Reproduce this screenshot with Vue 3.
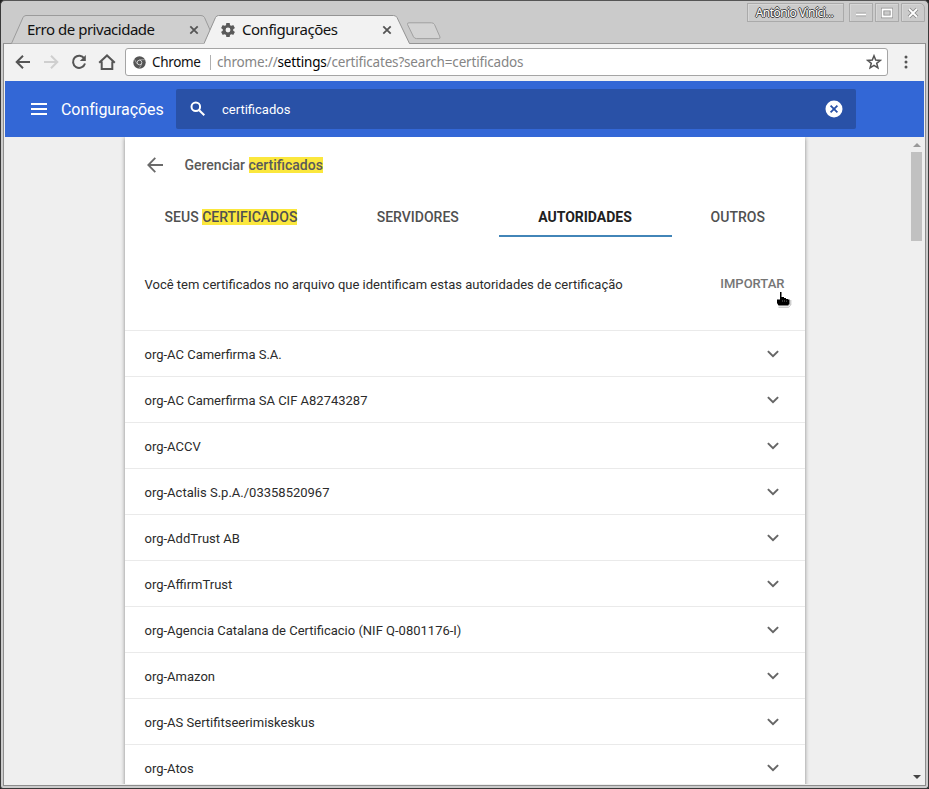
<script setup>
const tabs = [
  { id: 'seus', before: 'SEUS ', mark: 'CERTIFICADOS' },
  { id: 'servidores', before: 'SERVIDORES' },
  { id: 'autoridades', before: 'AUTORIDADES', active: true },
  { id: 'outros', before: 'OUTROS' }
]
const authorities = [
  'org-AC Camerfirma S.A.',
  'org-AC Camerfirma SA CIF A82743287',
  'org-ACCV',
  'org-Actalis S.p.A./03358520967',
  'org-AddTrust AB',
  'org-AffirmTrust',
  'org-Agencia Catalana de Certificacio (NIF Q-0801176-I)',
  'org-Amazon',
  'org-AS Sertifitseerimiskeskus',
  'org-Atos'
]
</script>

<template>
  <div class="window">
    <header class="tabstrip">
      <div class="tab tab-back">
        <svg class="tab-shape" width="206" height="29" viewBox="0 0 206 29">
          <path d="M0.5 28.5 12 2.5Q13 .5 15 .5H190Q192.500 .5 193.500 2.500L205 28.500" fill="#cfcfcf" stroke="#9b9b9b" />
        </svg>
        <span class="tab-title first-title">Erro de privacidade</span>
        <svg class="tab-close" width="10" height="10" viewBox="0 0 10 10"><path d="M1.300 1.300 8.700 8.700M8.700 1.300 1.300 8.700" /></svg>
      </div>
      <div class="tab tab-front">
        <svg class="tab-shape" width="206" height="30" viewBox="0 0 206 30">
          <path d="M0 29 11.500 2.500Q12.500 .5 14.500 .5H189.500Q192 .5 193 2.500L205.500 29V30H0Z" fill="#f2f2f2" />
          <path d="M0 28.500 11.500 2.500Q12.500 .5 14.500 .5H189.500Q192 .5 193 2.500L205.500 28.500" fill="none" stroke="#949494" />
        </svg>
        <svg class="gear" width="14" height="14" viewBox="2 2 20 20">
          <path fill="#5a5a5a" d="M19.430 12.980c.04-.32.070-.64.070-.98s-.03-.66-.07-.98l2.110-1.650c.19-.15.240-.42.120-.64l-2-3.460c-.12-.22-.39-.3-.61-.22l-2.490 1c-.52-.4-1.080-.73-1.690-.98l-.38-2.650C14.460 2.180 14.250 2 14 2h-4c-.25 0-.46.180-.49.420l-.38 2.650c-.61.250-1.170.59-1.690.98l-2.490-1c-.23-.09-.49 0-.61.220l-2 3.460c-.13.220-.07.490.12.640l2.110 1.650c-.04.320-.07.650-.07.980s.030.66.070.98l-2.110 1.650c-.19.150-.24.420-.12.640l2 3.460c.12.220.39.300.61.220l2.490-1c.52.400 1.080.730 1.690.980l.38 2.650c.030.240.240.420.490.420h4c.250 0 .46-.18.490-.42l.38-2.650c.61-.25 1.170-.59 1.690-.98l2.490 1c.230.090.490 0 .61-.22l2-3.460c.12-.22.070-.49-.12-.64zM12 15.500a3.500 3.500 0 1 1 0-7 3.500 3.500 0 0 1 0 7z" />
        </svg>
        <span class="tab-title second-title">Configurações</span>
        <svg class="tab-close" width="10" height="10" viewBox="0 0 10 10"><path d="M1.300 1.300 8.700 8.700M8.700 1.300 1.300 8.700" /></svg>
      </div>
      <svg class="new-tab" width="36" height="18" viewBox="0 0 36 18">
        <path d="M3 .8H25.500Q27.500 .8 28.500 2.500L34 15Q34.500 16.600 32.500 16.600H10.500Q8.500 16.600 7.500 14.800L1.500 2.500Q1 .8 3 .8Z" fill="#d3d3d3" stroke="#a0a0a0" />
      </svg>
      <div class="controls">
        <span class="user">Antônio Viníci...</span>
        <span class="control min"><svg width="12" height="12" viewBox="0 0 12 12"><path d="M1 7.500H11" class="halo" /><path d="M1 7.500H11" class="ink" /></svg></span>
        <span class="control max"><svg width="12" height="12" viewBox="0 0 12 12"><path d="M1.500 2.500H10.500V9.500H1.500Z" class="halo" /><path d="M1.500 2.500H10.500V9.500H1.500Z" class="ink" /></svg></span>
        <span class="control close"><svg width="12" height="12" viewBox="0 0 12 12"><path d="M2 2 10 10M10 2 2 10" class="halo" /><path d="M2 2 10 10M10 2 2 10" class="ink" /></svg></span>
      </div>
    </header>

    <div class="inner">
      <nav class="toolbar">
        <svg class="nav-icon" width="16" height="16" viewBox="0 0 16 16"><path d="M15 8H2M8 1.700 1.700 8 8 14.300" /></svg>
        <svg class="nav-icon disabled" width="16" height="16" viewBox="0 0 16 16"><path d="M1 8H14M8 1.700 14.300 8 8 14.300" /></svg>
        <svg class="nav-icon" width="16" height="16" viewBox="0 0 16 16"><path d="M13.300 4.500A6.100 6.100 0 1 0 14 9.500" /><path d="M14.800 1V7H8.800Z" class="solid" /></svg>
        <svg class="nav-icon" width="18" height="16" viewBox="0 0 18 16"><path d="M1.200 8.800 9 1.400 16.800 8.800M3.700 7.500V15H14.300V7.500" /></svg>
        <div class="omnibox">
          <svg width="13" height="13" viewBox="0 0 13 13">
            <circle cx="6.500" cy="6.500" r="6.200" fill="#555" />
            <path d="M6.500 3.700H12M4.100 7.900 1.400 3.200M8.900 7.900 6.200 12.500" stroke="#bbb" stroke-width=".7" fill="none" />
            <circle cx="6.500" cy="6.500" r="2.300" fill="#555" stroke="#ddd" stroke-width=".9" />
          </svg>
          <span class="scheme">Chrome</span>
          <span class="url">chrome://<b>settings</b>/certificates?search=certificados</span>
          <svg class="star" width="16" height="16" viewBox="0 0 16 16"><path d="M8 1.800 9.700 6.100 14.300 6.400 10.700 9.300 11.900 13.800 8 11.300 4.100 13.800 5.300 9.300 1.700 6.400 6.300 6.100Z" /></svg>
        </div>
        <svg class="dots" width="4" height="14" viewBox="0 0 4 14"><circle cx="2" cy="2" r="1.500" /><circle cx="2" cy="7" r="1.500" /><circle cx="2" cy="12" r="1.500" /></svg>
      </nav>

      <div class="appbar">
        <svg class="menu" width="16" height="12" viewBox="0 0 16 12"><path d="M0 1H16M0 6H16M0 11H16" /></svg>
        <h1>Configurações</h1>
        <div class="search">
          <svg width="16" height="16" viewBox="0 0 16 16"><circle cx="5.800" cy="5.800" r="4.300" /><path d="M9.200 9.200 14.300 14.300" /></svg>
          <span>certificados</span>
          <svg class="clear" width="18" height="18" viewBox="0 0 18 18"><circle cx="9" cy="9" r="8.500" /><path d="M5.600 5.600 12.400 12.400M12.400 5.600 5.600 12.400" /></svg>
        </div>
      </div>

      <div class="content">
        <main class="card">
          <div class="heading">
            <svg width="16" height="16" viewBox="0 0 16 16"><path d="M16 8H1.500M8.300 .9 1.300 8 8.300 15.100" /></svg>
            <h2>Gerenciar <mark>certificados</mark></h2>
          </div>
          <div class="cert-tabs">
            <div v-for="t in tabs" :key="t.id" class="cert-tab" :class="[t.id, { active: t.active }]">
              <span>{{ t.before }}<mark v-if="t.mark">{{ t.mark }}</mark></span>
            </div>
          </div>
          <div class="intro">
            <span class="intro-text">Você tem certificados no arquivo que identificam estas autoridades de certificação</span>
            <span class="import">IMPORTAR</span>
            <svg class="pointer" width="16" height="18" viewBox="0 0 16 18">
              <path d="M4 1H5.500V6H8V7H10V8H12V8.500H13.500V13.500H12.500V14.500H2.500L1 12V8.500H4Z" fill="#000" stroke="#fff" stroke-width="1.800" paint-order="stroke" />
              <path d="M2.500 16.200H12.500L14.800 14V9" fill="none" stroke="#aaa" stroke-width=".8" />
              <path d="M6.500 9V11M8.500 9V11M10.500 9.500V11" fill="none" stroke="#666" stroke-width=".6" />
            </svg>
          </div>
          <div v-for="name in authorities" :key="name" class="row">
            <span>{{ name }}</span>
            <svg width="12" height="8" viewBox="0 0 12 8"><path d="M.9 1.100 6 6.200 11.100 1.100" /></svg>
          </div>
        </main>
        <aside class="scrollbar">
          <i class="arrow up"></i>
          <i class="thumb"></i>
          <i class="arrow down"></i>
        </aside>
      </div>
    </div>
  </div>
</template>

<style>
body { margin: 0; background: #222; overflow: hidden; }
</style>

<style scoped>
* { box-sizing: border-box; }
.window {
  width: 929px; height: 789px; overflow: hidden;
  display: flex; flex-direction: column;
  background: #cbcbcb;
  border: 1px solid #393939; border-top-color: #555;
  border-radius: 5px 5px 3px 3px;
  font-family: Roboto, sans-serif;
}
.tabstrip { height: 42px; flex: none; display: flex; align-items: flex-start; padding-left: 10px; }
.tab { position: relative; width: 206px; height: 29px; margin-top: 14px; flex: none; display: flex; align-items: center; }
.tab-shape { position: absolute; left: 0; top: 0; }
.tab-front { margin-left: -13px; height: 30px; z-index: 1; }
.tab-title { position: relative; font: 15px/28px "Noto Sans", sans-serif; color: #111; white-space: nowrap; margin-top: -2px; }
.first-title { margin-left: 16px; width: 162px; letter-spacing: -0.48px; }
.tab-close { position: relative; stroke: #555; stroke-width: 1.8; fill: none; }
.gear { position: relative; margin-left: 17px; margin-right: 7px; }
.second-title { width: 140px; letter-spacing: -0.47px; }
.new-tab { margin: 21px 0 0 -4px; flex: none; }
.controls { display: flex; margin: 2px 3px 0 auto; }
.user, .control { height: 19px; border: 1px solid #aaa; display: flex; align-items: center; justify-content: center; box-shadow: inset 1px 1px #d6d6d6; }
.user { width: 97px; margin-right: 5px; padding-right: 2px; font: 12px/17px "Noto Sans", sans-serif; letter-spacing: -0.55px; color: #fff; text-shadow: 1px 0 #444, -1px 0 #444, 0 1px #444, 0 -1px #444; white-space: nowrap; }
.control { width: 24px; margin-right: 2px; }
.control.close { margin: 0; border-top-right-radius: 5px; }
.halo, .ink { fill: none; stroke: #8a8a8a; stroke-width: 3.6; }
.ink { stroke: #fff; stroke-width: 1.8; }
.inner {
  flex: none; height: 743px; margin: 0 2px; border: 1px solid #8d8d8d; border-top-color: #949494;
  display: flex; flex-direction: column; background: #efefef;
}
.toolbar { height: 37px; flex: none; display: flex; align-items: center; background: #f2f2f2; padding: 0 17px 1px 11px; }
.nav-icon { flex: none; fill: none; stroke: #555; stroke-width: 2; margin-right: 12px; }
.nav-icon:nth-child(4) { margin-left: -1px; }
.nav-icon.disabled { stroke: #cfcfcf; }
.solid { fill: #555; stroke: none; }
.nav-icon + .omnibox { margin-left: -3px; }
.omnibox { width: 763px; height: 28px; flex: none; border: 1px solid #a5a5a5; border-radius: 3px; background: #fff; display: flex; align-items: center; padding: 0 5px 0 7px; font: 13.5px/26px "Noto Sans", sans-serif; white-space: nowrap; }
.scheme { margin-left: 6px; width: 59px; height: 15px; line-height: 15px; border-right: 1px solid #b0b0b0; color: #111; letter-spacing: -.35px; }
.url { margin-left: 6px; color: #858585; letter-spacing: -.18px; }
.url b { font-weight: 400; color: #000; }
.star { margin-left: auto; fill: none; stroke: #555; stroke-width: 1.5; }
.dots { margin-left: auto; fill: #555; flex: none; }
.appbar { height: 56px; flex: none; margin: 0 1px; background: #3367d6; color: #fff; display: flex; align-items: center; padding-left: 26px; }
.menu { stroke: #fff; stroke-width: 2; flex: none; }
h1 { margin: 0 0 0 14px; width: 115px; font-size: 16px; font-weight: 400; white-space: nowrap; letter-spacing: -.08px; font-variant-ligatures: common-ligatures; flex: none; }
.search { width: 680px; height: 40px; flex: none; border-radius: 2px; background: #2951a7; display: flex; align-items: center; padding: 0 13px 0 14px; font-size: 13px; }
.search svg { fill: none; stroke: #fff; stroke-width: 2; }
.search span { margin-left: 16px; }
.search .clear { margin-left: auto; }
.clear circle { fill: #fff; stroke: none; }
.clear path { stroke: #2951a7; stroke-width: 1.800; }
.content { flex: 1; min-height: 0; margin: 0 1px 1px; display: flex; background: #efefef; overflow: hidden; }
.card { width: 680px; margin-left: 120px; height: 800px; background: #fff; flex: none; box-shadow: 0 1px 4px rgba(0,0,0,.45); }
.heading { height: 56px; display: flex; align-items: center; padding-left: 22px; color: #5a5a5a; }
.heading svg { fill: none; stroke: #6a6a6a; stroke-width: 1.800; }
h2 { margin: 0 0 0 21.5px; font-size: 14px; font-weight: 500; line-height: 16px; }
mark { background: #fbe73d; color: inherit; }
.cert-tabs { height: 44px; display: flex; font-size: 14px; line-height: 16px; font-weight: 500; color: #505050; }
.cert-tab { height: 44px; padding-top: 16px; text-align: center; white-space: nowrap; }
.seus { width: 212px; }
.servidores { width: 161.5px; }
.autoridades { width: 173px; }
.outros { width: 132.5px; }
.active { border-bottom: 2px solid #4285b8; font-weight: 700; color: #212121; }
.intro { position: relative; height: 93px; display: flex; justify-content: space-between; padding: 0 20.5px 0 19.5px; align-items: center; font-size: 13px; color: #2b2b2b; }
.intro-text { margin-top: 2px; }
.import { font-weight: 500; color: #757575; margin-top: -1px; }
.pointer { position: absolute; left: 651px; top: 54px; }
.row { height: 46px; border-top: 1px solid #eaeaea; display: flex; align-items: center; justify-content: space-between; padding: 1px 26px 0 19.5px; font-size: 13px; color: #2b2b2b; }
.row svg { fill: none; stroke: #666; stroke-width: 2; }
.scrollbar { margin-left: auto; width: 15px; flex: none; display: flex; flex-direction: column; align-items: center; padding: 6px 0 5px; }
.arrow { border: 4px solid transparent; }
.up { border-top: 0; border-bottom-color: #999; }
.down { border-bottom: 0; border-top-color: #444; margin-top: auto; }
.thumb { width: 11px; height: 89px; margin-top: 5px; background: #c1c1c1; }
</style>
